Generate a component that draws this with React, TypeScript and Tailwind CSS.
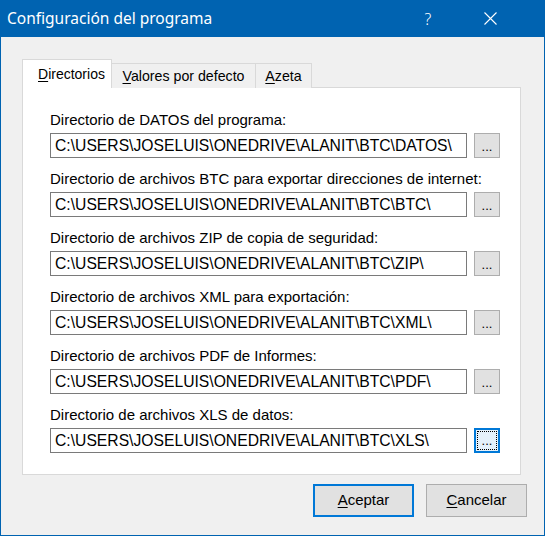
import React from "react";

const dirs = [
  { label: "Directorio de DATOS del programa:", path: "C:\\USERS\\JOSELUIS\\ONEDRIVE\\ALANIT\\BTC\\DATOS\\" },
  { label: "Directorio de archivos BTC para exportar direcciones de internet:", path: "C:\\USERS\\JOSELUIS\\ONEDRIVE\\ALANIT\\BTC\\BTC\\" },
  { label: "Directorio de archivos ZIP de copia de seguridad:", path: "C:\\USERS\\JOSELUIS\\ONEDRIVE\\ALANIT\\BTC\\ZIP\\" },
  { label: "Directorio de archivos XML para exportación:", path: "C:\\USERS\\JOSELUIS\\ONEDRIVE\\ALANIT\\BTC\\XML\\" },
  { label: "Directorio de archivos PDF de Informes:", path: "C:\\USERS\\JOSELUIS\\ONEDRIVE\\ALANIT\\BTC\\PDF\\" },
  { label: "Directorio de archivos XLS de datos:", path: "C:\\USERS\\JOSELUIS\\ONEDRIVE\\ALANIT\\BTC\\XLS\\" },
];

export default function App() {
  return (
    <div
      className="w-[545px] h-[536px] flex flex-col bg-[#f0f0f0] border-x border-b border-[#0063b1] text-black overflow-hidden"
      style={{ fontFamily: '"Liberation Sans", Arial, sans-serif' }}
    >
      {/* Title bar */}
      <div className="h-[37px] bg-[#0063b1] flex items-center text-white shrink-0">
        <div
          className="pl-[6px] text-[15.5px] flex-1 leading-none"
          style={{ fontFamily: '"Noto Sans", "Open Sans", sans-serif' }}
        >
          Configuración del programa
        </div>
        <div
          className="w-[46px] text-center text-[16px] mr-[16px]"
          style={{ fontFamily: '"Noto Sans", sans-serif', fontWeight: 300 }}
        >
          ?
        </div>
        <div className="w-[46px] h-[37px] flex items-center justify-center mr-[31px]">
          <svg width="13" height="13" viewBox="0 0 13 13">
            <path d="M0.5 0.5 L12.5 12.5 M12.5 0.5 L0.5 12.5" stroke="white" strokeWidth="1.1" />
          </svg>
        </div>
      </div>

      {/* Body */}
      <div className="pl-[21px] pt-[22px] flex flex-col">
        {/* Tabs */}
        <div className="flex items-end h-[29px] relative z-10">
          <div className="h-[29px] w-[90px] bg-white border border-b-0 border-[#d9d9d9] flex items-start pl-[15px] pt-[5px] text-[14px] leading-[18px]">
            <span>
              <span className="underline underline-offset-2">D</span>irectorios
            </span>
          </div>
          <div className="h-[25px] w-[144px] bg-[#f0f0f0] border border-l-0 border-b-0 border-[#d9d9d9] flex items-start justify-center pt-[3px] text-[14.2px] leading-[18px]">
            <span>
              <span className="underline underline-offset-2">V</span>alores por defecto
            </span>
          </div>
          <div className="h-[25px] w-[56px] bg-[#f0f0f0] border border-l-0 border-b-0 border-[#d9d9d9] flex items-start justify-center pt-[3px] text-[14.2px] leading-[18px]">
            <span>
              <span className="underline underline-offset-2">A</span>zeta
            </span>
          </div>
        </div>

        {/* Panel */}
        <div className="w-[499px] -mt-px bg-white border border-[#d9d9d9] pl-[27px] pt-[22px] pb-[21px] flex flex-col gap-[11px]">
          {dirs.map((d, i) => (
            <div key={i} className="flex flex-col">
              <div className="text-[15px] leading-[20px] h-[20px] whitespace-nowrap">{d.label}</div>
              <div className="flex items-center mt-[3px] gap-[7px]">
                <div className="w-[417px] h-[25px] border border-[#7a7a7a] bg-white flex items-center pl-[4px] text-[15.7px] leading-none whitespace-nowrap overflow-hidden">
                  {d.path}
                </div>
                {i === dirs.length - 1 ? (
                  <div className="w-[26px] h-[25px] border-2 border-[#0078d7] bg-[#e5f1fb] p-px">
                    <div className="w-full h-full border border-dotted border-black flex items-end justify-center text-[13px] leading-[14px] pb-px">
                      ...
                    </div>
                  </div>
                ) : (
                  <div className="w-[26px] h-[25px] border border-[#adadad] bg-[#e1e1e1] flex items-end justify-center text-[13px] leading-[14px] pb-[3px]">
                    ...
                  </div>
                )}
              </div>
            </div>
          ))}
        </div>

        {/* Buttons */}
        <div className="flex justify-end gap-[12px] mt-[9px] pr-[17px]">
          <div className="w-[101px] h-[33px] border-2 border-[#0078d7] bg-[#e1e1e1] flex items-center justify-center text-[15px]">
            <span>
              <span className="underline underline-offset-2">A</span>ceptar
            </span>
          </div>
          <div className="w-[101px] h-[33px] border border-[#adadad] bg-[#e1e1e1] flex items-center justify-center text-[15px]">
            <span>
              <span className="underline underline-offset-2">C</span>ancelar
            </span>
          </div>
        </div>
      </div>
    </div>
  );
}
